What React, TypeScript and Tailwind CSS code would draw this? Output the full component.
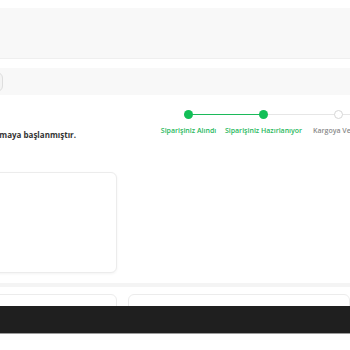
const steps = [
  { label: "Siparişiniz Alındı", done: true },
  { label: "Siparişiniz Hazırlanıyor", done: true },
  { label: "Kargoya Verildi", done: false },
  { label: "Teslim Edildi", done: false },
];

export default function App() {
  return (
    <div className="relative w-[350px] h-[350px] overflow-hidden bg-white font-['Open_Sans',sans-serif]">
      <div className="h-2" />
      <div className="h-[51px] bg-[#f8f8f8] border-b border-[#efefef]" />
      <div className="h-[9px]" />
      <div className="h-[27px] bg-[#f8f8f8] flex items-center">
        <div className="-ml-3 w-[15px] h-[20px] rounded-md border border-[#dedede] bg-[#f4f4f4]" />
      </div>

      <div className="flex items-start pt-[14px]">
        <div className="w-[76px] flex justify-end whitespace-nowrap pt-[20px]">
          <span className="text-[8px] font-bold text-[#333]">
            Siparişiniz hazırlanmaya başlanmıştır.
          </span>
        </div>
        <div className="ml-[75px] flex shrink-0">
          {steps.map((s, i) => (
            <div key={s.label} className="w-[75px] shrink-0 flex flex-col items-center">
              <div className="relative w-full h-[10px] flex items-center justify-center">
                {i > 0 && (
                  <div
                    className={`absolute left-0 right-1/2 h-px ${
                      s.done ? "bg-[#1cb95a]" : "bg-[#e6e6e6]"
                    }`}
                  />
                )}
                {i < steps.length - 1 && (
                  <div
                    className={`absolute left-1/2 right-0 h-px ${
                      steps[i + 1].done ? "bg-[#1cb95a]" : "bg-[#e6e6e6]"
                    }`}
                  />
                )}
                <div
                  className={`relative w-[9px] h-[9px] rounded-full ${
                    s.done ? "bg-[#12bf57]" : "bg-white border border-[#d6d6d6]"
                  }`}
                />
              </div>
              <span
                className={`mt-[7px] whitespace-nowrap text-[7px] font-semibold ${
                  s.done ? "text-[#1fb85c]" : "text-[#8a8a8a]"
                }`}
              >
                {s.label}
              </span>
            </div>
          ))}
        </div>
      </div>

      <div className="flex mt-[31px]">
        <div className="-ml-[40px] w-[157px] h-[101px] rounded-md border border-[#ececec] bg-white shadow-[0_1px_3px_rgba(0,0,0,0.05)]" />
      </div>

      <div className="mt-[10px] h-[4px] bg-[#f4f4f4]" />

      <div className="flex gap-[11px] mt-[7px]">
        <div className="-ml-[40px] w-[157px] h-[28px] rounded-md border border-[#ececec] bg-white" />
        <div className="flex-1 h-[28px] rounded-md border border-[#ececec] bg-white pl-[16px] pt-[8px]">
          <span className="text-[8px] font-semibold text-[#555]">Ödeme Bilgileri</span>
        </div>
      </div>

      <div className="absolute left-0 right-0 bottom-[16px] h-[28px] bg-[#1f1f1f] border-b border-[#9a9a9a]" />
    </div>
  );
}
